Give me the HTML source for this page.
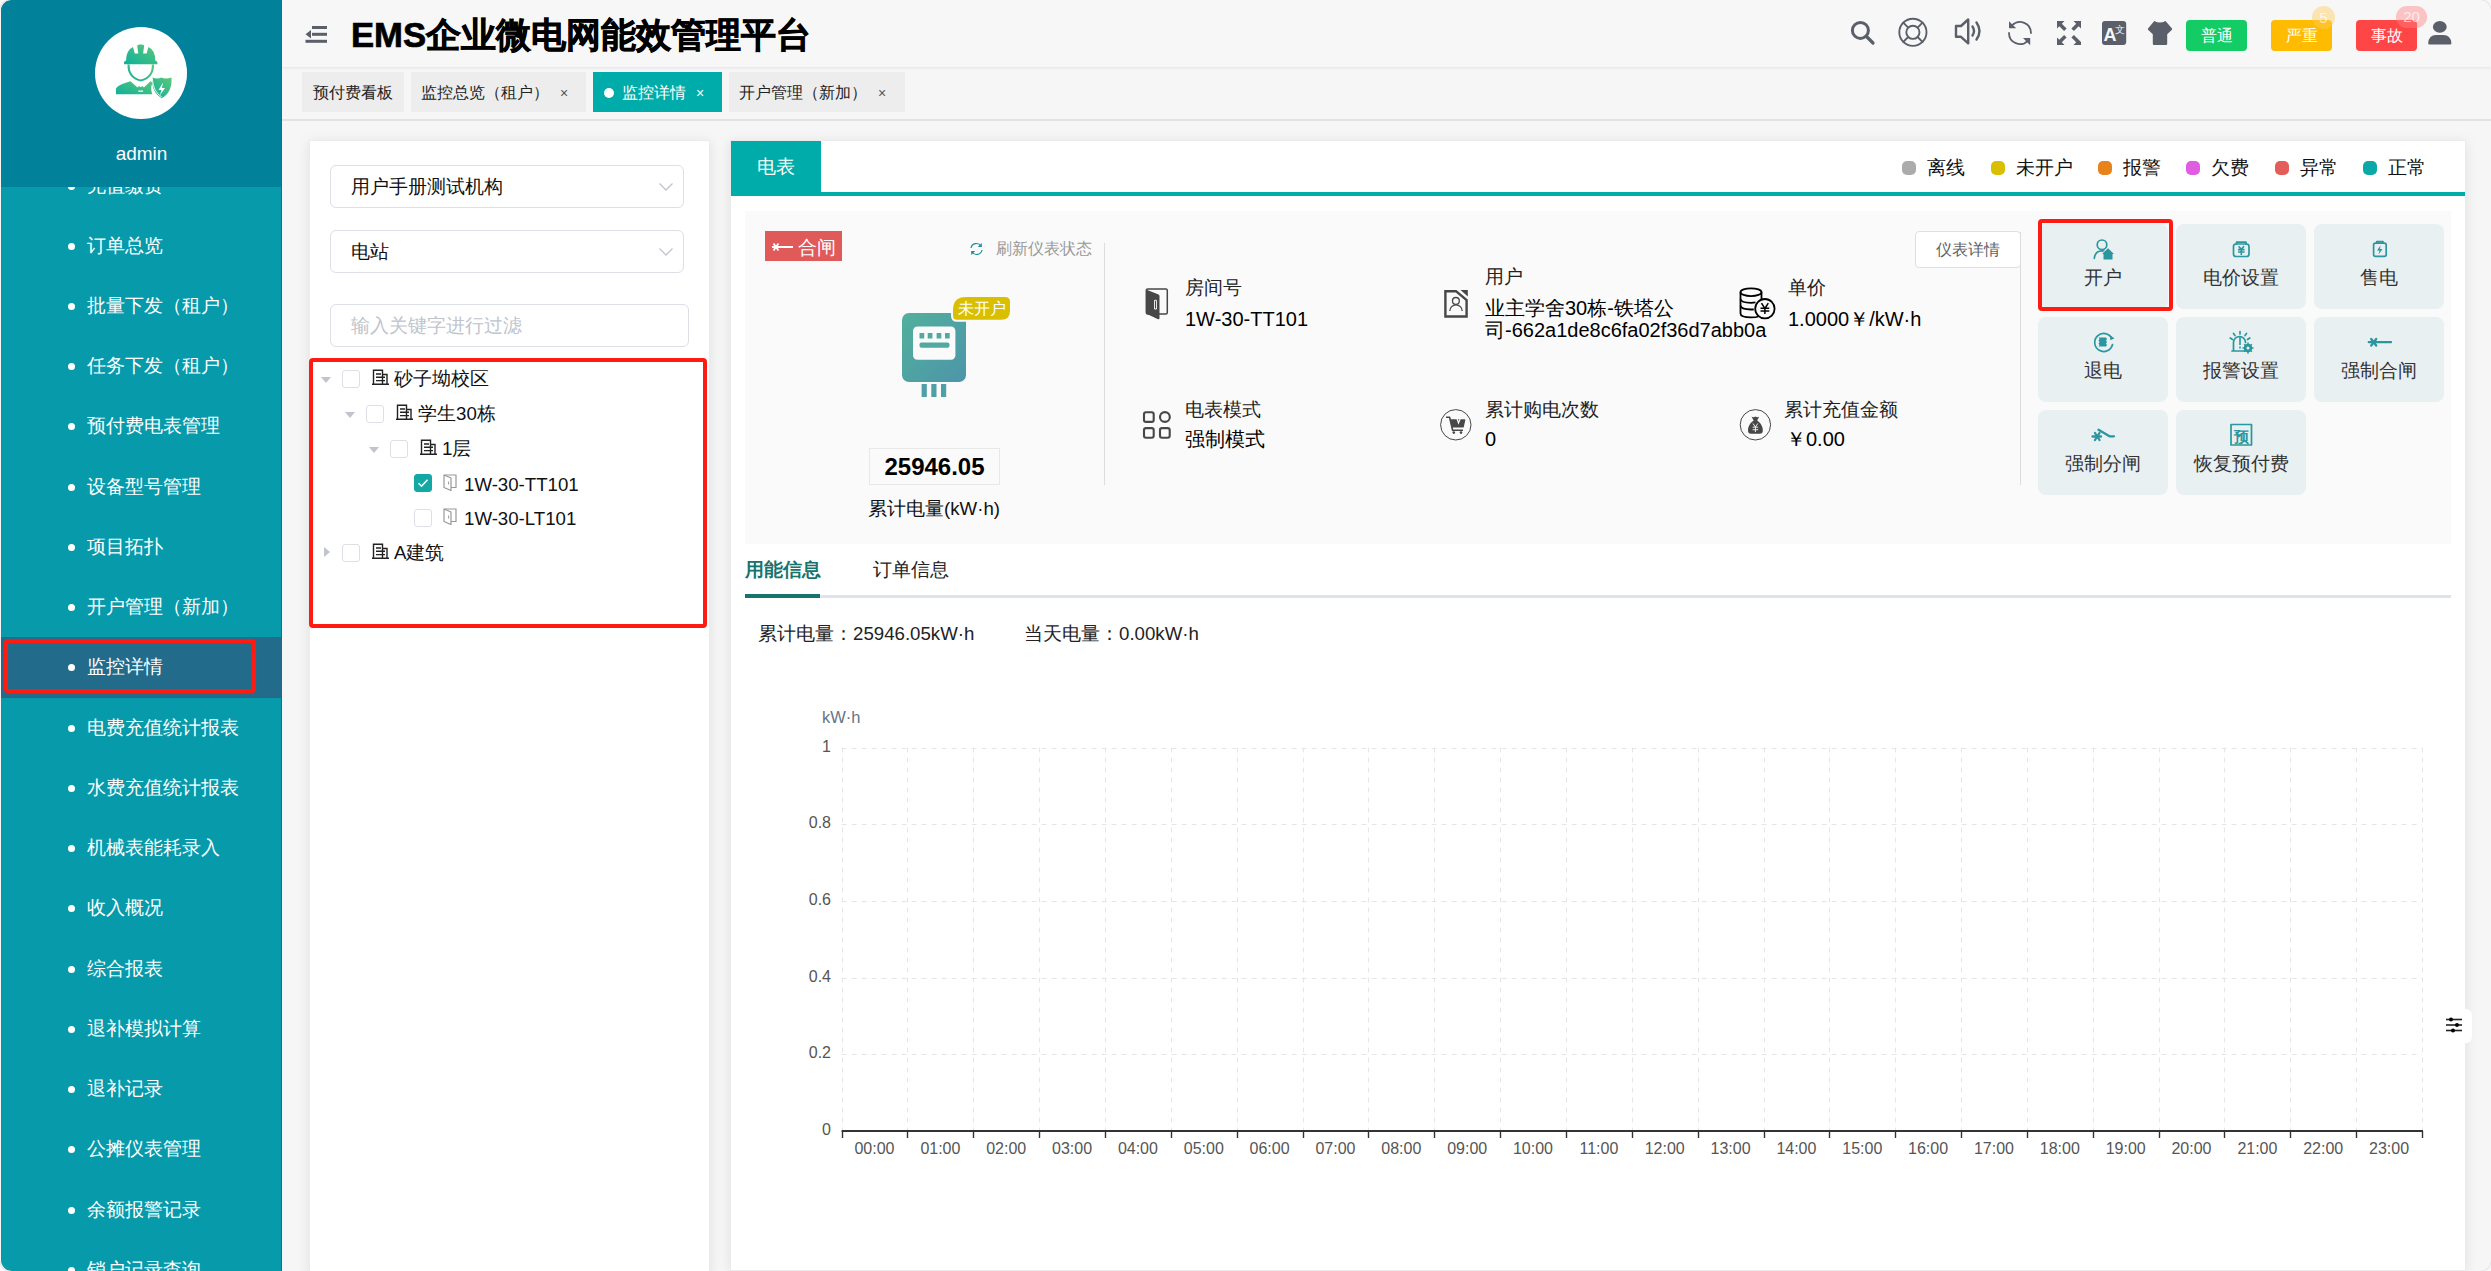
<!DOCTYPE html>
<html><head><meta charset="utf-8">
<style>
*{box-sizing:border-box;margin:0;padding:0}
html,body{width:2491px;height:1271px;overflow:hidden;background:#f6f6f6;font-family:"Liberation Sans",sans-serif;color:#222}
.a{position:absolute;white-space:nowrap}
#side{position:absolute;left:1px;top:0;width:281px;height:1271px;background:#069aab;border-radius:11px 0 0 11px;overflow:hidden}
#sidehead{position:absolute;left:0;top:0;width:281px;height:187px;background:#02829a;z-index:2}
.mi{position:absolute;left:0;width:281px;height:60px;color:#fff;font-size:18.67px;line-height:60px}
.mi i{position:absolute;left:67px;top:27px;width:7px;height:7px;border-radius:50%;background:#fff}
.mi span{position:absolute;left:86px;top:0}
#header{position:absolute;left:282px;top:0;width:2209px;height:67px;background:#f7f7f7;box-shadow:0 1px 3px rgba(0,0,0,.08)}
.tab{position:absolute;top:72px;height:40px;background:#ededed;font-size:16px;line-height:42px;color:#222}
.tab .x{position:absolute;font-size:14px;color:#555}
.card{position:absolute;background:#fff;border:1px solid #ebebeb;box-shadow:0 2px 12px rgba(0,0,0,.09)}

.sel{position:absolute;height:43px;border:1px solid #dcdfe6;border-radius:6px;background:#fff;font-size:18.67px;line-height:41px;padding-left:20px;color:#111;white-space:nowrap}
.chev{position:absolute;right:9px;top:16px}
.caret{position:absolute;width:0;height:0;border-left:5px solid transparent;border-right:5px solid transparent;border-top:6px solid #c0c4cc}
.caretr{position:absolute;width:0;height:0;border-top:5px solid transparent;border-bottom:5px solid transparent;border-left:6px solid #c0c4cc}
.cb{position:absolute;width:18px;height:18px;border:1px solid #dcdfe6;border-radius:3px;background:#fff}
.bld{position:absolute}
.tt{position:absolute;font-size:18.67px;line-height:25px;color:#111;white-space:nowrap}

.lg{position:absolute;top:156px;height:24px;font-size:18.67px;line-height:24px;color:#111;white-space:nowrap}
.lg i{position:absolute;left:0;top:5px;width:14px;height:14px;border-radius:5px}
.lg span{position:absolute;left:25px;top:0}

.il{position:absolute;font-size:18.67px;line-height:24px;color:#222;white-space:nowrap}
.iv{position:absolute;font-size:20px;line-height:24px;color:#000;white-space:nowrap}
.btn{position:absolute;width:130px;height:85px;background:#e8f0f2;border-radius:8px;font-size:18.67px;color:#333;text-align:center;padding-top:42px;line-height:24px}
</style></head><body>

<div id="side">
  <div id="sidehead">
    <div class="a" style="left:94px;top:27px;width:92px;height:92px;border-radius:50%;background:#fff"></div>
    <svg class="a" style="left:94px;top:27px" width="92" height="92" viewBox="95 27 92 92">
      <defs><linearGradient id="ag" x1="0" y1="1" x2="1" y2="0"><stop offset="0" stop-color="#0fb09c"/><stop offset="1" stop-color="#5cc878"/></linearGradient></defs>
      <g fill="url(#ag)">
        <path d="M124 62.5 Q124 60.8 126 60.8 Q126.2 50 133 47 L134.8 53.5 L138.3 53.5 L137.2 45.8 Q137.5 44.6 140.7 44.6 Q143.9 44.6 144.2 45.8 L143.1 53.5 L146.6 53.5 L148.4 47 Q155.2 50 155.4 60.8 Q157.4 60.8 157.4 62.5 L157.4 64.2 L124 64.2z"/>
        <path d="M127.5 64.5 Q127 78 140.7 81.5 Q154.4 78 154 64.5 L151.8 64.5 Q152.5 76.5 140.7 79.6 Q128.9 76.5 129.7 64.5z"/>
        <path d="M116 94.3 V88.5 Q118 84.5 130.5 81.2 L137.5 87.5 L139 86 L140.7 87.2 L142.4 86 L143.9 87.5 L150.5 81.2 Q152 82 152.5 83 Q150 88 152.3 94.3z M138.3 90.5 H143.1 V91.8 H138.3z"/>
        <path d="M161.5 77.6 Q165 79.6 171.5 77.6 Q172.5 92.5 161.8 98.2 Q151.2 92.5 152.2 77.6 Q158 79.6 161.5 77.6z"/>
      </g>
      <path d="M138.3 90.5 H143.1 V91.8 H138.3z" fill="#fff"/>
      <path d="M163 82.5 L158.5 90 H161.5 L159.8 95.5 L165 88 H162z" fill="#fff"/>
      <path d="M152.2 77.6 Q153 92 161.8 97" fill="none" stroke="#fff" stroke-width="0.9"/>
    </svg>
    <div class="a" style="left:0;top:141px;width:281px;text-align:center;color:#fff;font-size:19px;line-height:26px">admin</div>
  </div>
  <div class="mi" style="top:156px"><i></i><span>充值缴费</span></div>
  <div class="mi" style="top:216px"><i></i><span>订单总览</span></div>
  <div class="mi" style="top:276px"><i></i><span>批量下发（租户）</span></div>
  <div class="mi" style="top:336px"><i></i><span>任务下发（租户）</span></div>
  <div class="mi" style="top:396px"><i></i><span>预付费电表管理</span></div>
  <div class="mi" style="top:457px"><i></i><span>设备型号管理</span></div>
  <div class="mi" style="top:517px"><i></i><span>项目拓扑</span></div>
  <div class="mi" style="top:577px"><i></i><span>开户管理（新加）</span></div>
  <div class="mi" style="top:637px;height:61px;background:#236b8a"><i></i><span>监控详情</span></div>
  <div class="mi" style="top:698px"><i></i><span>电费充值统计报表</span></div>
  <div class="mi" style="top:758px"><i></i><span>水费充值统计报表</span></div>
  <div class="mi" style="top:818px"><i></i><span>机械表能耗录入</span></div>
  <div class="mi" style="top:878px"><i></i><span>收入概况</span></div>
  <div class="mi" style="top:939px"><i></i><span>综合报表</span></div>
  <div class="mi" style="top:999px"><i></i><span>退补模拟计算</span></div>
  <div class="mi" style="top:1059px"><i></i><span>退补记录</span></div>
  <div class="mi" style="top:1119px"><i></i><span>公摊仪表管理</span></div>
  <div class="mi" style="top:1180px"><i></i><span>余额报警记录</span></div>
  <div class="mi" style="top:1240px"><i></i><span>销户记录查询</span></div>
  <div class="a" style="left:3px;top:639px;width:252px;height:54px;border:4px solid #ff1a12;border-radius:4px;z-index:3"></div>
  <div class="a" style="left:280px;top:0;width:1px;height:1271px;background:#027a8c;z-index:4"></div>
</div>

<div id="header">
  <div class="a" style="left:69px;top:13px;font-size:34.67px;font-weight:bold;line-height:44px;color:#000;-webkit-text-stroke:0.7px #000">EMS企业微电网能效管理平台</div>
  <svg class="a" style="left:1560px;top:0" width="649" height="67" viewBox="1842 0 649 67">
    <g fill="none" stroke="#5a5f69" stroke-linecap="round">
      <circle cx="1860.4" cy="30.4" r="8" stroke-width="3"/>
      <line x1="1866.5" y1="36.5" x2="1873" y2="43" stroke-width="3.2"/>
      <circle cx="1912.9" cy="32.3" r="13.6" stroke-width="1.9"/>
      <circle cx="1912.9" cy="32.3" r="6.6" stroke-width="1.9"/>
      <path d="M1903.3 22.7l4.9 4.9M1922.5 22.7l-4.9 4.9M1903.3 41.9l4.9-4.9M1922.5 41.9l-4.9-4.9" stroke-width="1.9"/>
      <path d="M1956 26h5l7.2-6.5v23.8l-7.2-6.5h-5z" stroke-width="2.4" stroke-linejoin="round"/>
      <path d="M1972.5 26.5q3 4.5 0 9M1976.5 22.5q6 8.5 0 17" stroke-width="2.4"/>
      <path d="M2012.2 25.2A11 11 0 0 1 2031 33" stroke-width="1.8"/><path d="M2009 33A11 11 0 0 0 2027.8 40.8" stroke-width="1.8"/>
    </g>
    <g fill="#5a5f69">
      <path d="M2009 21.2V28.3H2016.2z"/>
      <path d="M2023 38H2030.2V45.2z"/>
      <path d="M2057 21h7.5l-2.7 2.7 4.8 4.8-2.5 2.5-4.8-4.8-2.3 2.3z"/>
      <path d="M2081 21h-7.5l2.7 2.7-4.8 4.8 2.5 2.5 4.8-4.8 2.3 2.3z"/>
      <path d="M2057 45h7.5l-2.7-2.7 4.8-4.8-2.5-2.5-4.8 4.8-2.3-2.3z"/>
      <path d="M2081 45h-7.5l2.7-2.7-4.8-4.8 2.5-2.5 4.8 4.8 2.3 2.3z"/>
      <rect x="2102" y="21" width="24.2" height="24" rx="3"/>
      <path d="M2154.3 21Q2159.9 24 2165.5 21L2172 28.5Q2172.5 29.3 2171.7 30.1L2167.2 34.2V43.8Q2167.2 45 2166 45H2154Q2152.8 45 2152.8 43.8V34.2L2148.3 30.1Q2147.5 29.3 2148 28.5z"/>
      <ellipse cx="2439.8" cy="26.9" rx="6.9" ry="5.9"/>
      <path d="M2428.2 43Q2429 35 2436 35H2443.5Q2450.5 35 2451.4 43Q2451.6 44.6 2450 44.6H2429.6Q2428 44.6 2428.2 43z"/>
    </g>
    <text x="2103.6" y="40.8" font-family="Liberation Sans" font-weight="bold" font-size="18" fill="#f7f7f7">A</text>
    <text x="2120" y="33" font-size="9.5" fill="#f7f7f7" text-anchor="middle" font-family="Liberation Sans, sans-serif">文</text>
  </svg>
  <div class="a" style="left:1904px;top:20px;width:61px;height:31px;border-radius:4px;background:#13cc65;color:#fff;font-size:16px;line-height:31px;text-align:center">普通</div>
  <div class="a" style="left:1989px;top:20px;width:61px;height:31px;border-radius:4px;background:#ffbb00;color:#fff;font-size:16px;line-height:31px;text-align:center">严重</div>
  <div class="a" style="left:2074px;top:20px;width:61px;height:31px;border-radius:4px;background:#ff4646;color:#fff;font-size:16px;line-height:31px;text-align:center">事故</div>
  <div class="a" style="left:2030px;top:6px;width:23px;height:23px;border-radius:12px;background:rgba(255,205,90,.45);color:rgba(255,255,255,.7);font-size:15px;line-height:23px;text-align:center">5</div>
  <div class="a" style="left:2114px;top:6px;width:31px;height:22px;border-radius:11px;background:rgba(255,130,130,.45);color:rgba(255,255,255,.7);font-size:15px;line-height:22px;text-align:center">20</div>
  <svg class="a" style="left:23px;top:25px" width="23" height="19" viewBox="0 0 23 19"><g fill="#5a5f69"><rect x="7" y="1" width="15" height="3"/><rect x="7" y="7.8" width="15" height="3"/><rect x="0.5" y="14.8" width="21.5" height="3"/><path d="M0.5 9.3l5.5-4.3v8.6z"/></g></svg>
</div>

<div class="tab" style="left:302px;width:102px;padding-left:11px">预付费看板</div>
<div class="tab" style="left:411px;width:175px;padding-left:10px">监控总览（租户）<span class="x" style="left:149px">×</span></div>
<div class="tab" style="left:593px;width:129px;background:#00aca9;color:#fff;padding-left:29px"><i style="position:absolute;left:11px;top:16px;width:10px;height:10px;border-radius:50%;background:#fff"></i>监控详情<span class="x" style="left:103px;color:#fff">×</span></div>
<div class="tab" style="left:729px;width:176px;padding-left:10px">开户管理（新加）<span class="x" style="left:149px">×</span></div>
<div class="a" style="left:282px;top:119px;width:2209px;height:2px;background:#e2e2e2"></div>

<div class="card" style="left:309px;top:140px;width:401px;height:1140px"></div>

<div class="sel" style="left:330px;top:165px;width:354px">用户手册测试机构<svg class="chev" width="16" height="10" viewBox="0 0 16 10"><path d="M1.5 1.5l6.5 6.5 6.5-6.5" fill="none" stroke="#c0c4cc" stroke-width="1.3"/></svg></div>
<div class="sel" style="left:330px;top:230px;width:354px">电站<svg class="chev" width="16" height="10" viewBox="0 0 16 10"><path d="M1.5 1.5l6.5 6.5 6.5-6.5" fill="none" stroke="#c0c4cc" stroke-width="1.3"/></svg></div>
<div class="sel" style="left:330px;top:304px;width:359px;color:#c0c4cc">输入关键字进行过滤</div>

<div class="caret" style="left:321px;top:377px"></div>
<div class="cb" style="left:342px;top:370px"></div>
<svg class="bld" style="left:372px;top:369px" width="17" height="16" viewBox="0 0 17 16"><path d="M1.5 15V1.2h9v13.8M10.5 5.5h4.5v9.5M0 15.2h17M4 5h5M4 8.3h9M4 11.6h9" fill="none" stroke="#222" stroke-width="1.4"/></svg>
<div class="tt" style="left:394px;top:366px">砂子坳校区</div>

<div class="caret" style="left:345px;top:412px"></div>
<div class="cb" style="left:366px;top:405px"></div>
<svg class="bld" style="left:396px;top:404px" width="17" height="16" viewBox="0 0 17 16"><path d="M1.5 15V1.2h9v13.8M10.5 5.5h4.5v9.5M0 15.2h17M4 5h5M4 8.3h9M4 11.6h9" fill="none" stroke="#222" stroke-width="1.4"/></svg>
<div class="tt" style="left:418px;top:401px">学生30栋</div>

<div class="caret" style="left:369px;top:447px"></div>
<div class="cb" style="left:390px;top:440px"></div>
<svg class="bld" style="left:420px;top:439px" width="17" height="16" viewBox="0 0 17 16"><path d="M1.5 15V1.2h9v13.8M10.5 5.5h4.5v9.5M0 15.2h17M4 5h5M4 8.3h9M4 11.6h9" fill="none" stroke="#222" stroke-width="1.4"/></svg>
<div class="tt" style="left:442px;top:436px">1层</div>

<div class="cb" style="left:414px;top:474px;background:#13a8a4;border-color:#13a8a4"><svg width="18" height="18" viewBox="0 0 18 18" style="position:absolute;left:-1px;top:-1px"><path d="M4.5 9.2l3 3 6-6.5" fill="none" stroke="#fff" stroke-width="1.5"/></svg></div>
<svg class="bld" style="left:443px;top:474px" width="14" height="17" viewBox="0 0 14 17"><path d="M1 1h12v12.5H8" fill="none" stroke="#999" stroke-width="1.2"/><path d="M1 1l7 3v12.5l-7-3z" fill="#fff" stroke="#999" stroke-width="1.2" stroke-linejoin="round"/><path d="M5.6 7.5v3" stroke="#999" stroke-width="1"/></svg>
<div class="tt" style="left:464px;top:472px">1W-30-TT101</div>

<div class="cb" style="left:414px;top:509px"></div>
<svg class="bld" style="left:443px;top:508px" width="14" height="17" viewBox="0 0 14 17"><path d="M1 1h12v12.5H8" fill="none" stroke="#999" stroke-width="1.2"/><path d="M1 1l7 3v12.5l-7-3z" fill="#fff" stroke="#999" stroke-width="1.2" stroke-linejoin="round"/><path d="M5.6 7.5v3" stroke="#999" stroke-width="1"/></svg>
<div class="tt" style="left:464px;top:506px">1W-30-LT101</div>

<div class="caretr" style="left:324px;top:547px"></div>
<div class="cb" style="left:342px;top:544px"></div>
<svg class="bld" style="left:372px;top:543px" width="17" height="16" viewBox="0 0 17 16"><path d="M1.5 15V1.2h9v13.8M10.5 5.5h4.5v9.5M0 15.2h17M4 5h5M4 8.3h9M4 11.6h9" fill="none" stroke="#222" stroke-width="1.4"/></svg>
<div class="tt" style="left:394px;top:540px">A建筑</div>

<div class="a" style="left:309px;top:358px;width:398px;height:270px;border:4px solid #ff1a12;border-radius:4px"></div>
<div class="card" style="left:730px;top:140px;width:1736px;height:1131px"></div>


<div class="a" style="left:731px;top:141px;width:90px;height:51px;background:#00aca9;color:#fff;font-size:18.67px;line-height:51px;text-align:center">电表</div>
<div class="a" style="left:731px;top:192px;width:1734px;height:4px;background:#00aca9"></div>
<div class="lg" style="left:1902px"><i style="background:#ababab"></i><span>离线</span></div>
<div class="lg" style="left:1991px"><i style="background:#d9bf00"></i><span>未开户</span></div>
<div class="lg" style="left:2098px"><i style="background:#e8821a"></i><span>报警</span></div>
<div class="lg" style="left:2186px"><i style="background:#e05ce0"></i><span>欠费</span></div>
<div class="lg" style="left:2275px"><i style="background:#e35d5b"></i><span>异常</span></div>
<div class="lg" style="left:2363px"><i style="background:#0aa8a6"></i><span>正常</span></div>

<div class="a" style="left:745px;top:211px;width:1706px;height:333px;background:#fafafa"></div>

<div class="a" style="left:765px;top:231px;width:77px;height:30px;background:#e05a5a;color:#fff;font-size:18.67px;line-height:30px">
  <svg style="position:absolute;left:6px;top:10px" width="22" height="12" viewBox="0 0 22 12"><path d="M8 6h14M1 6h7M2.5 2.5l5 7M7.5 2.5l-5 7" stroke="#fff" stroke-width="1.8" fill="none"/></svg>
  <span style="position:absolute;left:33px;top:1.5px">合闸</span></div>
<svg class="a" style="left:969px;top:242px" width="15" height="14" viewBox="0 0 15 14"><g fill="none" stroke="#1a8f97" stroke-width="1.2"><path d="M2 6a5.5 5.5 0 0 1 10-2"/><path d="M13 8a5.5 5.5 0 0 1 -10 2"/></g><path d="M12.8 1v4h-4z M2.2 13v-4h4z" fill="#1a8f97"/></svg>
<div class="a" style="left:996px;top:237px;font-size:16px;line-height:24px;color:#999">刷新仪表状态</div>
<div class="a" style="left:1104px;top:243px;width:1px;height:242px;background:#dcdcdc"></div>

<svg class="a" style="left:900px;top:294px" width="114" height="106" viewBox="900 294 114 106">
  <defs><linearGradient id="mg" x1="0" y1="0" x2="1" y2="1"><stop offset="0" stop-color="#52b09b"/><stop offset="1" stop-color="#4d95aa"/></linearGradient></defs>
  <rect x="902" y="313" width="64" height="69" rx="7" fill="url(#mg)"/>
  <rect x="913" y="326.4" width="42.4" height="33.3" rx="4.5" fill="#fafafa"/>
  <g fill="#52a9a0"><rect x="919.5" y="333" width="4.7" height="5.5"/><rect x="927.7" y="333" width="4.7" height="5.5"/><rect x="936.6" y="333" width="4.7" height="5.5"/><rect x="945" y="333" width="4.7" height="5.5"/><rect x="919.5" y="342.5" width="30" height="5.2" rx="2"/></g>
  <g fill="#4e9fa6"><rect x="921.6" y="384" width="5.2" height="13"/><rect x="931.3" y="384" width="5.2" height="13"/><rect x="941" y="384" width="5.2" height="13"/></g>
  <path d="M966 296 H1005 Q1011 296 1011 302 V310.7 Q1011 320.7 1001 320.7 H957 Q952 320.7 952 315.7 V310 Q952 296 966 296z" fill="#d9bf00" stroke="#fafafa" stroke-width="2"/>
</svg>
<div class="a" style="left:953px;top:296px;width:58px;text-align:center;color:#fff;font-size:16px;line-height:25px">未开户</div>

<div class="a" style="left:869px;top:448px;width:131px;height:37px;border:1px solid #e8e8e8;background:#fafafa;font-size:24px;font-weight:bold;line-height:35px;text-align:center;color:#000">25946.05</div>
<div class="a" style="left:834px;top:497px;width:200px;text-align:center;font-size:18.67px;line-height:24px;color:#111">累计电量(kW·h)</div>

<svg class="a" style="left:1140px;top:284px" width="32" height="40" viewBox="1140 284 32 40">
  <rect x="1146.3" y="289" width="21" height="25" rx="1.5" fill="none" stroke="#474747" stroke-width="1.5"/>
  <path d="M1146 289.5 L1158.5 294.5 Q1159.5 295 1159.5 296 V318 Q1159.5 319.8 1158 319.2 L1147 314 Q1146 313.5 1146 312.5z" fill="#474747"/>
  <rect x="1154" y="299.8" width="3" height="9.6" rx="1.2" fill="#fafafa"/><rect x="1154.9" y="300.7" width="1.2" height="7.8" fill="#474747"/>
</svg>
<div class="il" style="left:1185px;top:276px">房间号</div>
<div class="iv" style="left:1185px;top:307px">1W-30-TT101</div>

<svg class="a" style="left:1440px;top:286px" width="32" height="36" viewBox="1440 286 32 36">
  <path d="M1445.4 291.2 H1456 L1466.6 300 V316.5 H1445.4z" fill="none" stroke="#474747" stroke-width="2.4"/>
  <path d="M1460.5 290 H1467.8 V296.5z" fill="#474747"/>
  <circle cx="1455.9" cy="300.9" r="3.4" fill="none" stroke="#474747" stroke-width="1.3"/>
  <path d="M1449.8 311 a6.2 6.2 0 0 1 12.4 0" fill="none" stroke="#474747" stroke-width="1.3"/>
</svg>
<div class="il" style="left:1485px;top:265px">用户</div>
<div class="iv" style="left:1485px;top:297px;line-height:22px">业主学舍30栋-铁塔公<br>司-662a1de8c6fa02f36d7abb0a</div>

<svg class="a" style="left:1736px;top:284px" width="44" height="40" viewBox="1736 284 44 40">
  <g fill="none" stroke="#000" stroke-width="1.8">
    <ellipse cx="1751" cy="292.2" rx="10.5" ry="3.9"/>
    <path d="M1740.5 292.2 V313.5 Q1740.5 317.4 1751 317.4 Q1756 317.4 1758.5 316.5"/>
    <path d="M1761.5 292.2 V300"/>
    <path d="M1740.5 299 Q1741 302.8 1751 302.8 Q1753.5 302.8 1755.5 302.4"/>
    <path d="M1740.5 305.7 Q1741 309.5 1751 309.5 Q1752.5 309.5 1753.8 309.3"/>
    <circle cx="1764.9" cy="308.7" r="9.7" fill="#fafafa"/>
  </g>
  <path d="M1761.5 303.2 L1764.9 308.5 L1768.3 303.2 M1760.5 308.3 H1769.3 M1760.5 311 H1769.3 M1764.9 308.5 V314" fill="none" stroke="#000" stroke-width="1.5"/>
</svg>
<div class="il" style="left:1788px;top:276px">单价</div>
<div class="iv" style="left:1788px;top:306.5px">1.0000￥/kW·h</div>

<svg class="a" style="left:1140px;top:408px" width="34" height="34" viewBox="1140 408 34 34">
  <g fill="none" stroke="#474747" stroke-width="2.1">
    <rect x="1144" y="412.2" width="9.7" height="9.7" rx="2"/>
    <circle cx="1164.9" cy="417" r="4.9"/>
    <rect x="1144" y="428.1" width="9.7" height="9.7" rx="2"/>
    <rect x="1160" y="428.1" width="9.7" height="9.7" rx="2"/>
  </g>
</svg>
<div class="il" style="left:1185px;top:398px">电表模式</div>
<div class="iv" style="left:1185px;top:427px">强制模式</div>

<svg class="a" style="left:1438px;top:407px" width="36" height="36" viewBox="1438 407 36 36">
  <circle cx="1455.8" cy="424.8" r="15.2" fill="none" stroke="#474747" stroke-width="1"/>
  <path d="M1446 417.3 H1449.6 L1452.6 430.3 H1463 M1450.8 420 H1464.5 L1463 426.8 H1451.8z" fill="none" stroke="#474747" stroke-width="1.6" stroke-linejoin="round"/>
  <path d="M1451 420 H1464.5 L1463 426.8 H1452.4z" fill="#474747"/>
  <circle cx="1453.8" cy="432.6" r="1.3" fill="#474747"/><circle cx="1461" cy="432.6" r="1.3" fill="#474747"/>
  <path d="M1456.5 417 L1458.5 423 L1461 417" fill="none" stroke="#fafafa" stroke-width="1.2"/>
</svg>
<div class="il" style="left:1485px;top:398px">累计购电次数</div>
<div class="iv" style="left:1485px;top:427px">0</div>

<svg class="a" style="left:1738px;top:407px" width="36" height="36" viewBox="1738 407 36 36">
  <circle cx="1755.4" cy="424.8" r="15.2" fill="none" stroke="#474747" stroke-width="1"/>
  <path d="M1751.5 416.5 Q1753.5 417.8 1755.4 416.5 Q1757.3 417.8 1759.2 416.5 L1757.2 420.5 Q1762.8 424.5 1762.8 430.5 Q1762.8 433.8 1759.8 433.8 H1751 Q1748 433.8 1748 430.5 Q1748 424.5 1753.6 420.5z" fill="#474747"/>
  <path d="M1753 423.5 L1755.4 427 L1757.8 423.5 M1752.6 427.2 H1758.2 M1752.6 429.7 H1758.2 M1755.4 427 V432" fill="none" stroke="#fafafa" stroke-width="0.9"/>
</svg>
<div class="il" style="left:1784px;top:398px">累计充值金额</div>
<div class="iv" style="left:1786px;top:427px">￥0.00</div>

<div class="a" style="left:1915px;top:231px;width:106px;height:37px;border:1px solid #dcdfe6;border-radius:4px;background:#fff;color:#606266;font-size:16px;line-height:35px;text-align:center">仪表详情</div>
<div class="a" style="left:2020px;top:232px;width:1px;height:253px;background:#dcdcdc"></div>

<div class="btn" style="left:2038px;top:224px">开户</div>
<div class="btn" style="left:2176px;top:224px">电价设置</div>
<div class="btn" style="left:2314px;top:224px">售电</div>
<div class="btn" style="left:2038px;top:317px">退电</div>
<div class="btn" style="left:2176px;top:317px">报警设置</div>
<div class="btn" style="left:2314px;top:317px">强制合闸</div>
<div class="btn" style="left:2038px;top:410px">强制分闸</div>
<div class="btn" style="left:2176px;top:410px">恢复预付费</div>

<svg class="a" style="left:2085px;top:234px" width="310" height="220" viewBox="2085 234 310 220">
 <g fill="none" stroke="#2a969f" stroke-width="1.7" stroke-linecap="round" stroke-linejoin="round">
  <!-- kaihu -->
  <circle cx="2102" cy="244.8" r="4.8"/>
  <path d="M2094.3 258.5 Q2095 250.8 2102 250.8 Q2104 250.8 2105.5 251.5"/>
  <!-- dianjia -->
  <rect x="2233.5" y="244" width="15.5" height="12.5" rx="2.5"/>
  <path d="M2236.5 244 V242.2 H2246 V244"/>
  <!-- shoudian -->
  <rect x="2373.6" y="243.2" width="12.6" height="13.2" rx="1.8"/>
  <path d="M2376.8 243 V241.6 H2383 V243"/>
  <!-- tuidian -->
  <path d="M2111.8 338.5 A9 9 0 1 0 2112.5 344.5"/>
  <!-- baojing -->
  <path d="M2232 351 H2245 M2233.5 351 V342.5 A6 6 0 0 1 2245.5 342.5" />
  <path d="M2230.2 338 L2232.5 339.5 M2233.5 333.5 L2235 335.5 M2240 331.5 V334 M2246.5 333.5 L2245 335.5 M2249.8 338 L2247.5 339.5"/>
  <!-- hezha -->
  <path d="M2378.5 342.2 H2391 M2368.8 342.2 H2378.5" stroke-width="2.3"/>
  <path d="M2371.2 339 L2376.2 345.5 M2376.2 339 L2371.2 345.5" stroke-width="2.3"/>
  <!-- fenzha -->
  <path d="M2098.5 429.8 L2109.5 436.3 H2114" stroke-width="2.3"/>
  <path d="M2092.5 436.5 H2101" stroke-width="2.3"/>
  <path d="M2095 433 L2099.5 440 M2099.5 433 L2095 440" stroke-width="2.3"/>
  <!-- yu -->
  <rect x="2231" y="424.5" width="20.5" height="20.5" stroke-width="1.7"/>
 </g>
 <g fill="#2a969f">
  <path d="M2108 248.2 L2114 254 H2112.5 V259.5 H2103.5 V254 H2102z" stroke="#e8f0f2" stroke-width="1.2" paint-order="stroke"/>
  <path d="M2238.6 246.2 L2241.3 249.2 L2244 246.2 M2238 249.6 H2244.6 M2238 252 H2244.6 M2241.3 249.2 V255" fill="none" stroke="#2a969f" stroke-width="1.6"/>
  <path d="M2380.5 245.5 L2377 250.5 H2379.5 L2378.5 254.5 L2382.5 249 H2380z"/>
  <path d="M2098.5 337.5 H2106 L2107 339 L2106 340.5 L2107 342 L2106 343.5 L2107 345 L2106 346.5 H2098.5 L2099.5 345 L2098.5 343.5 L2099.5 342 L2098.5 340.5 L2099.5 339z"/>
  <path d="M2110.5 335.5 L2114.5 338.5 L2110 340z"/>
  <path d="M2239.2 337 H2240.8 V345 H2239.2z M2239.2 346.5 H2240.8 V348.5 H2239.2z"/>
  <circle cx="2248" cy="348" r="4.3"/>
 </g>
 <circle cx="2248" cy="348" r="1.5" fill="#e8f0f2"/>
 <path d="M2248 342.5 V353.5 M2242.5 348 H2253.5 M2244.2 344.2 L2251.8 351.8 M2251.8 344.2 L2244.2 351.8" stroke="#2a969f" stroke-width="1.6"/>
 <circle cx="2248" cy="348" r="1.5" fill="#e8f0f2"/>
 <text x="2241.2" y="441.5" font-size="14.5" font-weight="bold" fill="#2a969f" text-anchor="middle" font-family="Liberation Sans, sans-serif">预</text>
</svg>
<div class="a" style="left:2038px;top:219px;width:135px;height:92px;border:4px solid #ff1a12;border-radius:4px"></div>

<div class="a" style="left:745px;top:558px;font-size:18.67px;font-weight:bold;line-height:24px;color:#17736d">用能信息</div>
<div class="a" style="left:873px;top:558px;font-size:18.67px;line-height:24px;color:#222">订单信息</div>
<div class="a" style="left:745px;top:595px;width:1706px;height:3px;background:#dfe4ec"></div>
<div class="a" style="left:745px;top:594px;width:75px;height:4px;background:#17736d"></div>
<div class="a" style="left:758px;top:622px;font-size:18.67px;line-height:24px;color:#222">累计电量：25946.05kW·h</div>
<div class="a" style="left:1024px;top:622px;font-size:18.67px;line-height:24px;color:#222">当天电量：0.00kW·h</div>
<svg class="a" style="left:740px;top:690px" width="1726" height="500" viewBox="740 690 1726 500">
<g stroke="#e6e6e6" stroke-width="1" stroke-dasharray="5,5"><line x1="841.6" y1="1054.5" x2="2422.0" y2="1054.5"/><line x1="841.6" y1="978.5" x2="2422.0" y2="978.5"/><line x1="841.6" y1="901.5" x2="2422.0" y2="901.5"/><line x1="841.6" y1="824.5" x2="2422.0" y2="824.5"/><line x1="841.6" y1="748.5" x2="2422.0" y2="748.5"/><line x1="842.5" y1="747.5" x2="842.5" y2="1131.0"/><line x1="907.5" y1="747.5" x2="907.5" y2="1131.0"/><line x1="973.5" y1="747.5" x2="973.5" y2="1131.0"/><line x1="1039.5" y1="747.5" x2="1039.5" y2="1131.0"/><line x1="1105.5" y1="747.5" x2="1105.5" y2="1131.0"/><line x1="1171.5" y1="747.5" x2="1171.5" y2="1131.0"/><line x1="1237.5" y1="747.5" x2="1237.5" y2="1131.0"/><line x1="1303.5" y1="747.5" x2="1303.5" y2="1131.0"/><line x1="1368.5" y1="747.5" x2="1368.5" y2="1131.0"/><line x1="1434.5" y1="747.5" x2="1434.5" y2="1131.0"/><line x1="1500.5" y1="747.5" x2="1500.5" y2="1131.0"/><line x1="1566.5" y1="747.5" x2="1566.5" y2="1131.0"/><line x1="1632.5" y1="747.5" x2="1632.5" y2="1131.0"/><line x1="1698.5" y1="747.5" x2="1698.5" y2="1131.0"/><line x1="1764.5" y1="747.5" x2="1764.5" y2="1131.0"/><line x1="1829.5" y1="747.5" x2="1829.5" y2="1131.0"/><line x1="1895.5" y1="747.5" x2="1895.5" y2="1131.0"/><line x1="1961.5" y1="747.5" x2="1961.5" y2="1131.0"/><line x1="2027.5" y1="747.5" x2="2027.5" y2="1131.0"/><line x1="2093.5" y1="747.5" x2="2093.5" y2="1131.0"/><line x1="2159.5" y1="747.5" x2="2159.5" y2="1131.0"/><line x1="2224.5" y1="747.5" x2="2224.5" y2="1131.0"/><line x1="2290.5" y1="747.5" x2="2290.5" y2="1131.0"/><line x1="2356.5" y1="747.5" x2="2356.5" y2="1131.0"/><line x1="2422.5" y1="747.5" x2="2422.5" y2="1131.0"/></g><g stroke="#333" stroke-width="1.4"><line x1="841.6" y1="1131.0" x2="2423.0" y2="1131.0" stroke-width="1.8"/><line x1="842.5" y1="1131.0" x2="842.5" y2="1138.0"/><line x1="907.5" y1="1131.0" x2="907.5" y2="1138.0"/><line x1="973.5" y1="1131.0" x2="973.5" y2="1138.0"/><line x1="1039.5" y1="1131.0" x2="1039.5" y2="1138.0"/><line x1="1105.5" y1="1131.0" x2="1105.5" y2="1138.0"/><line x1="1171.5" y1="1131.0" x2="1171.5" y2="1138.0"/><line x1="1237.5" y1="1131.0" x2="1237.5" y2="1138.0"/><line x1="1303.5" y1="1131.0" x2="1303.5" y2="1138.0"/><line x1="1368.5" y1="1131.0" x2="1368.5" y2="1138.0"/><line x1="1434.5" y1="1131.0" x2="1434.5" y2="1138.0"/><line x1="1500.5" y1="1131.0" x2="1500.5" y2="1138.0"/><line x1="1566.5" y1="1131.0" x2="1566.5" y2="1138.0"/><line x1="1632.5" y1="1131.0" x2="1632.5" y2="1138.0"/><line x1="1698.5" y1="1131.0" x2="1698.5" y2="1138.0"/><line x1="1764.5" y1="1131.0" x2="1764.5" y2="1138.0"/><line x1="1829.5" y1="1131.0" x2="1829.5" y2="1138.0"/><line x1="1895.5" y1="1131.0" x2="1895.5" y2="1138.0"/><line x1="1961.5" y1="1131.0" x2="1961.5" y2="1138.0"/><line x1="2027.5" y1="1131.0" x2="2027.5" y2="1138.0"/><line x1="2093.5" y1="1131.0" x2="2093.5" y2="1138.0"/><line x1="2159.5" y1="1131.0" x2="2159.5" y2="1138.0"/><line x1="2224.5" y1="1131.0" x2="2224.5" y2="1138.0"/><line x1="2290.5" y1="1131.0" x2="2290.5" y2="1138.0"/><line x1="2356.5" y1="1131.0" x2="2356.5" y2="1138.0"/><line x1="2422.5" y1="1131.0" x2="2422.5" y2="1138.0"/></g>
<g font-family="Liberation Sans, sans-serif" font-size="16" fill="#555" text-anchor="middle"><text x="874.5" y="1154">00:00</text><text x="940.4" y="1154">01:00</text><text x="1006.2" y="1154">02:00</text><text x="1072.1" y="1154">03:00</text><text x="1137.9" y="1154">04:00</text><text x="1203.8" y="1154">05:00</text><text x="1269.6" y="1154">06:00</text><text x="1335.5" y="1154">07:00</text><text x="1401.3" y="1154">08:00</text><text x="1467.2" y="1154">09:00</text><text x="1533.0" y="1154">10:00</text><text x="1598.9" y="1154">11:00</text><text x="1664.7" y="1154">12:00</text><text x="1730.6" y="1154">13:00</text><text x="1796.4" y="1154">14:00</text><text x="1862.3" y="1154">15:00</text><text x="1928.1" y="1154">16:00</text><text x="1994.0" y="1154">17:00</text><text x="2059.8" y="1154">18:00</text><text x="2125.7" y="1154">19:00</text><text x="2191.5" y="1154">20:00</text><text x="2257.4" y="1154">21:00</text><text x="2323.2" y="1154">22:00</text><text x="2389.1" y="1154">23:00</text></g>
<g font-family="Liberation Sans, sans-serif" font-size="16" fill="#555" text-anchor="end"><text x="831" y="1135.0">0</text><text x="831" y="1058.3">0.2</text><text x="831" y="981.6">0.4</text><text x="831" y="904.9">0.6</text><text x="831" y="828.2">0.8</text><text x="831" y="751.5">1</text></g>
<text x="822" y="723" font-family="Liberation Sans, sans-serif" font-size="16.5" fill="#667585">kW·h</text>
</svg>
<div class="a" style="left:2438px;top:1009px;width:34px;height:34px;background:#fff;border-radius:6px"></div>
<svg class="a" style="left:2444px;top:1015px" width="20" height="20" viewBox="0 0 20 20"><g stroke="#222" stroke-width="1.6"><line x1="2" y1="4.5" x2="18" y2="4.5"/><line x1="2" y1="10" x2="18" y2="10"/><line x1="2" y1="15.5" x2="18" y2="15.5"/></g><g fill="#000"><circle cx="7" cy="4.5" r="2"/><circle cx="13" cy="10" r="2"/><circle cx="9" cy="15.5" r="2"/></g></svg>
<div style="position:absolute;left:-1px;top:-1px;width:2493px;height:1273px;border-radius:12px;border:1.5px solid #e2e2e2;box-shadow:0 0 0 40px #f8f7f7;z-index:100;pointer-events:none"></div>
</body></html>
